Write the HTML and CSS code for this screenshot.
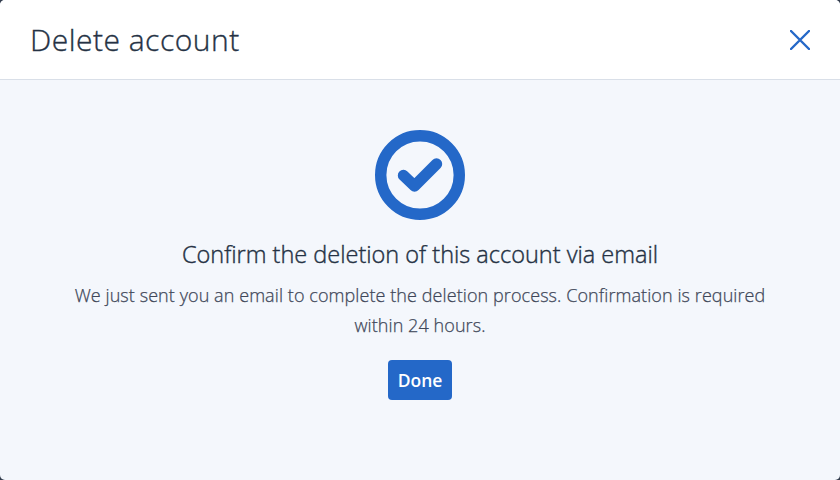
FILE: index.html
```html
<!DOCTYPE html>
<html lang="en">
<head>
<meta charset="utf-8">
<title>Delete account</title>
<link rel="stylesheet" href="styles.css">
</head>
<body>
<section class="dialog" role="dialog" aria-labelledby="title">
  <header class="dialog-header">
    <h1 id="title">Delete account</h1>
    <button class="close" aria-label="Close">
      <svg width="20" height="20" viewBox="0 0 20 20"><path d="M1 1L19 19M19 1L1 19" fill="none" stroke="currentColor" stroke-width="2.4" stroke-linecap="round"/></svg>
    </button>
  </header>
  <div class="dialog-body">
    <svg class="status" width="90" height="90" viewBox="0 0 90 90"><circle cx="45" cy="45" r="39.3" fill="none" stroke="currentColor" stroke-width="11.4"/><path d="M28.5 45.5L39.5 56L61.5 34" fill="none" stroke="currentColor" stroke-width="11.4" stroke-linecap="round" stroke-linejoin="round"/></svg>
    <h2>Confirm the deletion of this account via email</h2>
    <p>We just sent you an email to complete the deletion process. Confirmation is required within 24 hours.</p>
    <button class="done">Done</button>
  </div>
</section>
</body>
</html>
```
FILE: styles.css
```css
* { box-sizing: border-box; }
body { margin: 0; background: #333d4d; font-family: "Open Sans", sans-serif; color: #253244; }
.dialog { height: 480px; border-radius: 5px; overflow: hidden; background: #f4f7fc; display: flex; flex-direction: column; }
.dialog-header { height: 80px; padding: 0 30px; background: #fff; border-bottom: 1px solid #d9dfe8; display: flex; align-items: center; justify-content: space-between; }
h1 { margin: 0; font-size: 30px; line-height: 40px; font-weight: 300; letter-spacing: .5px; -webkit-text-stroke: .35px currentColor; }
.close { border: 0; padding: 0; background: none; color: #2468c8; display: flex; }
.dialog-body { flex: 1; padding: 50px 70px; display: flex; flex-direction: column; align-items: center; text-align: center; }
.status { color: #2468c8; }
h2 { margin: 19px 0 11px; font-size: 23.5px; line-height: 30px; font-weight: 300; -webkit-text-stroke: .4px currentColor; }
p { margin: 0 0 20px; font-size: 18px; line-height: 30px; font-weight: 300; letter-spacing: .08px; color: #404759; -webkit-text-stroke: .25px currentColor; }
.done { width: 64px; height: 40px; padding: 0; border: 0; border-radius: 4px; background: #2468c8; color: #fff; font: 600 17.5px/40px "Open Sans", sans-serif; }
```
